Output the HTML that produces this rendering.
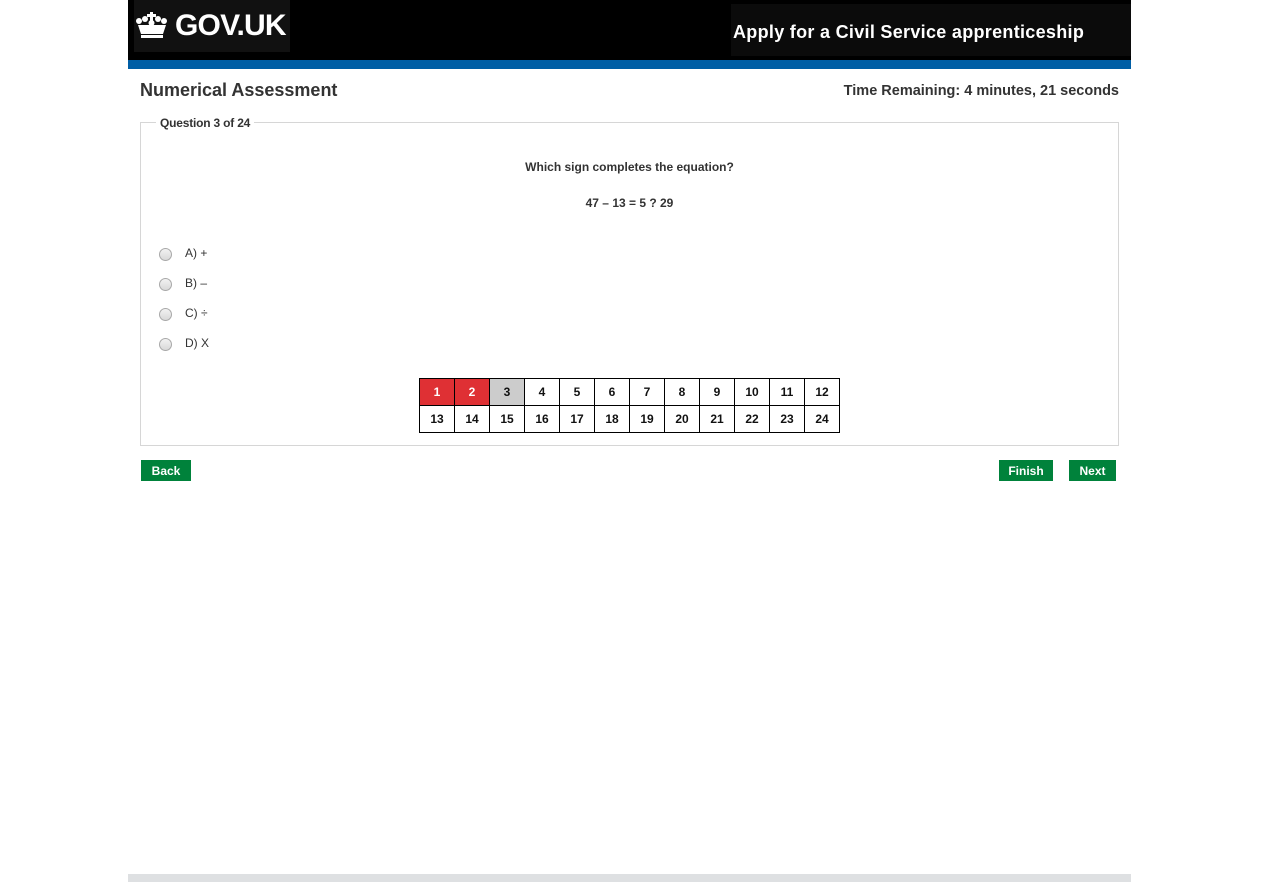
<!DOCTYPE html>
<html><head><style>
body{margin:0;background:#fff;font-family:"Liberation Sans",Arial,sans-serif;color:#222;}
.wrap{position:absolute;left:128px;width:1003px;top:0;height:882px;}
.hdr{position:absolute;left:0;top:0;width:1003px;height:60px;background:#000;}
.blue{position:absolute;left:0;top:60px;width:1003px;height:9px;background:#005ea5;}
.logo{position:absolute;left:6px;top:0;width:156px;height:52px;background:#111;color:#fff;font-weight:bold;font-size:30px;}
.logo span{position:absolute;left:41px;top:9px;letter-spacing:-0.8px}
.banner{position:absolute;left:603px;top:4px;width:400px;height:52px;background:#0b0b0b;color:#fff;font-size:18px;font-weight:bold;}
.banner span{position:absolute;left:2px;top:18px;letter-spacing:0.3px}
h1{position:absolute;left:12px;top:80px;margin:0;font-size:18px;font-weight:bold;color:#333;}
.time{position:absolute;right:12px;top:83px;font-size:14.5px;font-weight:bold;color:#333;}
.fs{position:absolute;left:12px;top:122px;width:977px;height:322px;border:1px solid #d6d6d6;}
.leg{position:absolute;left:15px;top:-7px;background:#fff;padding:0 4px;font-size:12px;font-weight:bold;color:#333;letter-spacing:-0.2px}
.q{position:absolute;left:0;width:977px;text-align:center;font-size:12px;font-weight:bold;color:#333;}
.opt{position:absolute;left:18px;font-size:12px;color:#333;}
.opt i{position:absolute;left:0;top:1px;width:11px;height:11px;border:1px solid #a9a9a9;border-radius:50%;background:linear-gradient(#f2f2f2,#d8d8d8);}
.opt b{font-weight:normal;position:absolute;left:26px;top:-1px;white-space:nowrap}
table{position:absolute;left:278px;top:255px;border-collapse:collapse;}
td{width:34px;height:26px;border:1px solid #000;text-align:center;font-size:12px;font-weight:bold;padding:0;color:#111}
.r{background:#df3034;color:#fff}.g{background:#ccc}
.btn{position:absolute;top:460px;height:21px;background:#00823b;color:#fff;font-size:12px;font-weight:bold;text-align:center;line-height:22px;}
.foot{position:absolute;left:0;top:874px;width:1003px;height:8px;background:#dee0e2;}
</style></head><body><div class="wrap">
<div class="hdr">
<div class="logo"><svg style="position:absolute;left:1px;top:12px" width="34" height="27" viewBox="0 0 34 27" fill="#fff"><rect x="15" y="0" width="3" height="9"/><rect x="12" y="2" width="9" height="3"/><circle cx="4" cy="9" r="3"/><circle cx="10" cy="7" r="3"/><circle cx="16.5" cy="11" r="3"/><circle cx="23" cy="7" r="3"/><circle cx="29" cy="9" r="3"/><path d="M3 13 L31 13 L28 22 L6 22 Z"/><rect x="6" y="23" width="22" height="3"/></svg><span>GOV.UK</span></div>
<div class="banner"><span>Apply for a Civil Service apprenticeship</span></div>
</div>
<div class="blue"></div>
<h1>Numerical Assessment</h1>
<div class="time">Time Remaining: 4 minutes, 21 seconds</div>
<div class="fs"><div class="leg">Question 3 of 24</div>
<div class="q" style="top:37px">Which sign completes the equation?</div>
<div class="q" style="top:73px">47 – 13 = 5 ? 29</div>
<div class="opt" style="top:124px"><i></i><b>A) +</b></div>
<div class="opt" style="top:154px"><i></i><b>B) –</b></div>
<div class="opt" style="top:184px"><i></i><b>C) ÷</b></div>
<div class="opt" style="top:214px"><i></i><b>D) X</b></div>
<table><tr><td class="r">1</td><td class="r">2</td><td class="g">3</td><td>4</td><td>5</td><td>6</td><td>7</td><td>8</td><td>9</td><td>10</td><td>11</td><td>12</td></tr>
<tr><td>13</td><td>14</td><td>15</td><td>16</td><td>17</td><td>18</td><td>19</td><td>20</td><td>21</td><td>22</td><td>23</td><td>24</td></tr></table>
</div>
<div class="btn" style="left:13px;width:50px">Back</div>
<div class="btn" style="left:871px;width:54px">Finish</div>
<div class="btn" style="left:941px;width:47px">Next</div>
<div class="foot"></div>
</div></body></html>
